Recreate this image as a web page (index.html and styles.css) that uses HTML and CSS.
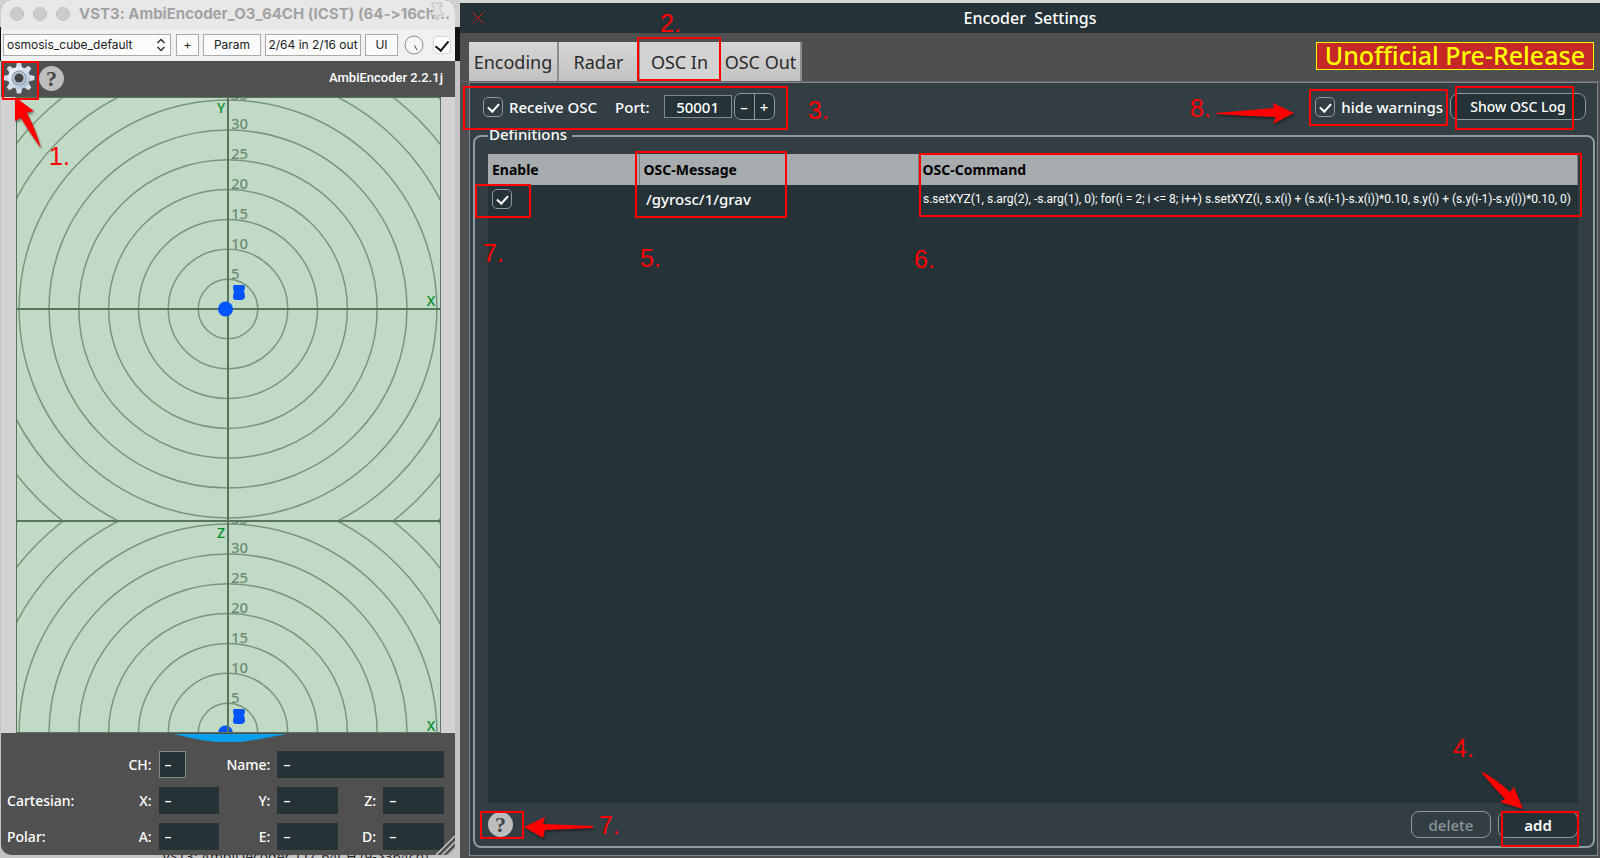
FILE: index.html
```html
<!DOCTYPE html>
<html lang="en">
<head>
<meta charset="utf-8">
<title>Encoder Settings</title>
<link rel="stylesheet" href="styles.css">
</head>
<body>
<main class="desktop">
  <div class="plugin-column">
    <section class="plugin-window" aria-label="AmbiEncoder">
      <header class="titlebar">
        <span class="light"></span><span class="light"></span><span class="light"></span>
        <h1 class="titlebar-text">VST3: AmbiEncoder_O3_64CH (ICST) (64-&gt;16ch...</h1>
        <svg class="pin" viewBox="0 0 16 18" aria-hidden="true"><path d="M3 1h10v3h-2v5l3 2v2H9v5H7v-5H2v-2l3-2V4H3z" fill="#e4e4e4" stroke="#bdbdbd"/></svg>
      </header>
      <div class="host-bar">
        <select class="host-select" aria-label="Preset"><option>osmosis_cube_default</option></select>
        <svg class="chevrons" viewBox="0 0 10 14" aria-hidden="true"><path d="M1.500 5 5 1.500 8.500 5M1.500 9 5 12.500 8.500 9" fill="none" stroke="#333" stroke-width="1.500"/></svg>
        <button class="host-button plus">+</button>
        <button class="host-button param">Param</button>
        <button class="host-button io">2/64 in 2/16 out</button>
        <button class="host-button ui">UI</button>
        <svg class="knob" viewBox="0 0 20 20" aria-hidden="true"><circle cx="10" cy="10" r="9" fill="#f6f6f6" stroke="#8a8a8a"/><path d="M10.500 10.500 13 15" stroke="#444"/></svg>
        <input class="host-check" type="checkbox" checked aria-label="Enable plugin">
      </div>
      <div class="plugin-head">
        <button class="icon-button" aria-label="Settings">
          <svg class="gear" viewBox="-16 -16 32 32">
            <defs>
              <linearGradient id="metal" x1="0" y1="0" x2="1" y2="1"><stop offset="0" stop-color="#fff"/><stop offset=".5" stop-color="#cfdcea"/><stop offset="1" stop-color="#9fb2c8"/></linearGradient>
              <path id="tooth" d="M-3.500-9-2-15.500H2L3.500-9z"/>
            </defs>
            <g fill="#d3deea"><use href="#tooth"/><use href="#tooth" transform="rotate(45)"/><use href="#tooth" transform="rotate(90)"/><use href="#tooth" transform="rotate(135)"/><use href="#tooth" transform="rotate(180)"/><use href="#tooth" transform="rotate(225)"/><use href="#tooth" transform="rotate(270)"/><use href="#tooth" transform="rotate(315)"/></g>
            <circle r="11" fill="url(#metal)"/><circle r="7.500" fill="#8d9cae"/><circle r="6.500" fill="#b9c7d6"/><circle r="4.500" fill="#444"/>
          </svg>
        </button>
        <button class="help">?</button>
        <span class="version">AmbiEncoder 2.2.1j</span>
      </div>
      <div class="radar-area">
        <svg class="radar" viewBox="0 0 425 636" role="img" aria-label="Source position radar">
          <defs>
            <clipPath id="top-half"><rect width="425" height="424"/></clipPath>
            <clipPath id="bottom-half"><rect y="424" width="425" height="212"/></clipPath>
            <g id="rings" fill="none" stroke="#7a957f" stroke-width="1.500">
              <circle r="29.800"/><circle r="59.700"/><circle r="89.500"/><circle r="119.400"/><circle r="149.200"/><circle r="179"/><circle r="208.900"/><circle r="238.700"/><circle r="268.600"/><circle r="298.400"/>
            </g>
            <g id="marks" class="mark">
              <text x="3" y="-30">5</text><text x="3" y="-60">10</text><text x="3" y="-90">15</text><text x="3" y="-120">20</text><text x="3" y="-150">25</text><text x="3" y="-180">30</text><text x="3" y="-209">35</text>
            </g>
            <path id="source" d="M5-23q0-1 2-1h8q2 0 2 2 0 2-1 4 1 3 1 6-1 3-3 3H8q-3 0-3-3 0-3 1-5-1-3-1-6z"/>
          </defs>
          <rect width="425" height="636" fill="#c1dac5"/>
          <g clip-path="url(#top-half)">
            <g transform="translate(212 212)"><use href="#rings"/><use href="#marks"/></g>
            <path d="M0 212H425" stroke="#57745d" stroke-width="2"/>
          </g>
          <g clip-path="url(#bottom-half)">
            <g transform="translate(212 636)"><use href="#rings"/><use href="#marks"/></g>
            <circle cx="209.500" cy="636" r="7.500" fill="#0055ff"/>
          </g>
          <path d="M212 0V636M0 424H425" stroke="#57745d" stroke-width="2"/>
          <rect x=".5" y=".5" width="424" height="635" fill="none" stroke="#57745d"/>
          <circle cx="209.500" cy="212" r="7.500" fill="#0055ff"/>
          <use href="#source" x="212" y="212" fill="#0055ff"/><use href="#source" x="212" y="636" fill="#0055ff"/>
          <path d="M158 637H271Q250 641 226 645H200Q176 642 158 637z" fill="#0a9fea"/>
          <g class="axis"><text x="205" y="16">Y</text><text x="415" y="209">X</text><text x="205" y="441">Z</text><text x="415" y="634">X</text></g>
        </svg>
      </div>
      <form class="coords">
        <label class="c-label wide" for="ch">CH:</label><input class="field ch" id="ch" value="–">
        <label class="c-label" for="name">Name:</label><input class="field name" id="name" value="–">
        <span class="c-group">Cartesian:</span>
        <label class="c-label" for="x">X:</label><input class="field" id="x" value="–">
        <label class="c-label" for="y">Y:</label><input class="field" id="y" value="–">
        <label class="c-label" for="z">Z:</label><input class="field" id="z" value="–">
        <span class="c-group">Polar:</span>
        <label class="c-label" for="a">A:</label><input class="field" id="a" value="–">
        <label class="c-label" for="e">E:</label><input class="field" id="e" value="–">
        <label class="c-label" for="d">D:</label><input class="field" id="d" value="–">
      </form>
      <svg class="grip" viewBox="0 0 20 20" aria-hidden="true"><path d="M1 20 20 1M7 20 20 7M13 20 20 13" stroke="#c9c9c9" stroke-width="1.500"/></svg>
    </section>
    <div class="behind">VST3: AmbiDecoder_O2_64CH (9-&gt;364ch)</div>
  </div>

  <section class="settings" aria-label="Encoder Settings">
    <header class="settings-title">
      <button class="close" aria-label="Close"><svg viewBox="0 0 12 12"><path d="M.5.500l11 11M11.500.500l-11 11" stroke="#c4121b" fill="none"/></svg></button>
      <h2 class="settings-heading">Encoder&nbsp; Settings</h2>
    </header>
    <div class="tab-row">
      <nav class="tabs" role="tablist">
        <button class="tab first" role="tab">Encoding</button>
        <button class="tab" role="tab">Radar</button>
        <button class="tab active" role="tab" aria-selected="true">OSC In</button>
        <button class="tab" role="tab">OSC Out</button>
      </nav>
      <strong class="release">Unofficial Pre-Release</strong>
    </div>
    <div class="pane">
      <div class="options">
        <label class="check-label"><input class="check" type="checkbox" checked>Receive OSC</label>
        <label class="port-label" for="port">Port:</label>
        <input class="port" id="port" value="50001">
        <div class="stepper"><button>–</button><button>+</button></div>
        <label class="check-label push"><input class="check" type="checkbox" checked>hide warnings</label>
        <button class="pill log">Show OSC Log</button>
      </div>
      <fieldset class="definitions">
        <legend>Definitions</legend>
        <div class="list">
          <table class="osc-table">
            <colgroup><col class="col-enable"><col class="col-message"><col></colgroup>
            <thead><tr><th>Enable</th><th>OSC-Message</th><th>OSC-Command</th></tr></thead>
            <tbody><tr>
              <td><input class="check" type="checkbox" checked aria-label="Enable /gyrosc/1/grav"></td>
              <td class="message">/gyrosc/1/grav</td>
              <td class="command">s.setXYZ(1, s.arg(2), -s.arg(1), 0); for(i = 2; i &lt;= 8; i++) s.setXYZ(i, s.x(i) + (s.x(i-1)-s.x(i))*0.10, s.y(i) + (s.y(i-1)-s.y(i))*0.10, 0)</td>
            </tr></tbody>
          </table>
        </div>
        <div class="list-actions">
          <button class="help">?</button>
          <button class="pill push" disabled>delete</button>
          <button class="pill add">add</button>
        </div>
      </fieldset>
    </div>
  </section>

  <svg class="notes" viewBox="0 0 1600 858" preserveAspectRatio="none">
    <g fill="none" stroke="#f00" stroke-width="2">
      <rect x="3" y="62" width="35" height="37"/>
      <rect x="638" y="38" width="82" height="42"/>
      <rect x="464" y="87" width="323" height="42"/>
      <rect x="1310" y="90" width="137" height="35"/>
      <rect x="1456" y="87" width="117" height="42"/>
      <rect x="636" y="152" width="150" height="65"/>
      <rect x="920" y="154" width="661" height="62"/>
      <rect x="476" y="185" width="54" height="32"/>
      <rect x="481" y="812" width="42" height="26"/>
      <rect x="1502" y="812" width="76" height="34"/>
    </g>
    <g class="arrows">
      <path d="M15 97 34 111 27 113Q36 130 41 148 31 135 21 118L15 121z"/>
      <path d="M1216 113 1274 108 1273 103 1294 113 1273 124 1276 117Q1246 116 1216 114z"/>
      <path d="M524 827 545 817 543 824 593 826V828L545 830 543 838z"/>
      <path d="M1483 772Q1497 780 1510 792L1514 787 1523 809 1500 802 1505 799Q1492 786 1482 773z"/>
    </g>
    <g class="numbers">
      <text x="49" y="165">1.</text><text x="660" y="32">2.</text><text x="808" y="119">3.</text><text x="1453" y="757">4.</text><text x="640" y="267">5.</text><text x="914" y="268">6.</text><text x="483" y="262">7.</text><text x="599" y="834">7.</text><text x="1190" y="117">8.</text>
    </g>
  </svg>
</main>
</body>
</html>
```

FILE: styles.css
```css
* { box-sizing: border-box; }

body {
  margin: 0;
  font: 500 14px/20px "Noto Sans", "Open Sans", sans-serif;
  color: #fff;
}

button, input, select { font: inherit; color: inherit; margin: 0; padding: 0; }
h1, h2 { margin: 0; }

.desktop {
  position: relative;
  display: grid;
  grid-template-columns: minmax(0, 460fr) minmax(0, 1140fr);
  min-height: 100vh;
  overflow: hidden;
  background: linear-gradient(#d0d0d0 27px, #141414 27px, #141414 61px, #c4c4c4 61px);
}

/* plug-in window */
.plugin-column { display: flex; flex-direction: column; padding: 0 5px 0 1px; }

.plugin-window {
  position: relative;
  flex: 1;
  display: flex;
  flex-direction: column;
  border-radius: 10px;
  overflow: hidden;
  background: #505050;
}

.titlebar {
  display: flex;
  align-items: center;
  gap: 9px;
  height: 30px;
  padding: 0 8px 2px 9px;
  background: #e9e8e8;
}
.light { flex: none; width: 14px; height: 14px; border: 1px solid #bfbfbf; border-radius: 50%; background: #cdcccc; }
.titlebar-text {
  flex: 1;
  min-width: 0;
  font: 700 15px/20px Inter, sans-serif;
  font-variant-ligatures: none;
  color: #a3a2a2;
  white-space: nowrap;
}
.pin { position: absolute; top: 2px; right: 10px; width: 16px; height: 18px; }

.host-bar {
  display: flex;
  align-items: center;
  height: 31px;
  padding: 0 5px 2px 2px;
  background: #f1f1f1;
  color: #222;
  font: 12px/16px Inter, sans-serif;
}
.host-select, .host-button { height: 22px; border: 1px solid #aaa; border-radius: 0; background: #fbfbfb; }
.host-select { flex: 1; min-width: 0; padding-left: 3px; appearance: none; }
.chevrons { width: 10px; height: 14px; margin: 0 10px 0 -15px; }
.host-button { margin-right: 4px; white-space: nowrap; }
.plus { width: 23px; }
.param { width: 58px; }
.io { width: 96px; }
.ui { width: 33px; }
.knob { width: 20px; height: 20px; margin: 0 10px 0 2px; }
.host-check {
  appearance: none;
  display: grid;
  place-items: center;
  width: 16px;
  height: 16px;
  border-radius: 4px;
  background: #fff;
  box-shadow: 0 0 2px #999;
}
.host-check::before {
  content: "";
  width: 6px;
  height: 11px;
  border: solid #111;
  border-width: 0 2px 2px 0;
  transform: rotate(40deg);
}

.plugin-head { display: flex; align-items: center; height: 36px; padding: 0 12px 2px 2px; }
.icon-button { width: 32px; height: 32px; border: 0; background: none; }
.gear { display: block; width: 32px; height: 32px; }
.help {
  width: 25px;
  height: 25px;
  border: 0;
  border-radius: 50%;
  background: #bdbdbd;
  color: #444;
  font: 700 22px/25px "Liberation Serif", serif;
}
.plugin-head .help { margin-left: 4px; }
.version { margin-left: auto; font: 500 13px/20px Roboto, sans-serif; }

.radar-area {
  padding: 0 14px 0 15px;
  background: #d3d2d3;
}
.radar { display: block; position: relative; width: 100%; overflow: visible; }
.mark { font-size: 15px; fill: #6f8a74; }
.axis { font-size: 14px; fill: #00902b; text-anchor: middle; }

.coords {
  display: grid;
  grid-template-columns: 83fr 55fr 61fr 42fr 61fr 31fr 61fr;
  gap: 9px 7px;
  align-items: center;
  padding: 18px 11px 4px 6px;
}
.c-label { text-align: right; }
.wide { grid-column: 1 / 3; }
.field {
  width: 100%;
  min-width: 0;
  height: 27px;
  padding-left: 6px;
  border: 0;
  background: #253238;
}
.ch { width: 27px; border: 1px solid #7f8b90; padding-left: 5px; }
.name { grid-column: 5 / 8; }
.grip { position: absolute; right: 0; bottom: 0; width: 20px; height: 20px; }

.behind {
  height: 3px;
  margin-left: 148px;
  padding-left: 13px;
  overflow: hidden;
  color: #222;
  font: 14px/4px "Open Sans", sans-serif;
  white-space: nowrap;
}

/* settings window */
.settings {
  display: flex;
  flex-direction: column;
  border-top: 3px solid #d8d8d8;
  background: #4f4f4f;
}
.settings-title {
  display: grid;
  grid-template-columns: 12px 1fr 12px;
  align-items: center;
  height: 30px;
  padding: 0 12px;
  background: #253238;
}
.close { width: 12px; height: 12px; border: 0; background: none; }
.close svg { display: block; }
.settings-heading { font-size: 16px; font-weight: 500; text-align: center; }

.tab-row {
  display: flex;
  justify-content: space-between;
  height: 49px;
  padding: 9px 6px 0 9px;
  border-bottom: 1px solid #666;
}
.tabs { display: flex; }
.tab {
  width: 81px;
  border: 0;
  border-right: 2px solid #8c8c8c;
  background: linear-gradient(#d6d6d6, #c2c2c2);
  color: #2b2b2b;
  font-size: 18px;
  font-weight: 400;
  white-space: nowrap;
}
.first { width: 90px; }
.active { background: #d3d3d3; }
.release {
  height: 28px;
  padding: 0 8px;
  border: 1px solid #ff0;
  background: #c62828;
  color: #ff0;
  font: 500 25px/25px "Noto Sans", sans-serif;
}

.pane {
  flex: 1;
  display: flex;
  flex-direction: column;
  margin: 0 2px 2px 9px;
  padding: 10px 2px 7px 3px;
  border: 1px solid #7d898e;
  background: #323e44;
}
.options { display: flex; align-items: center; height: 27px; padding: 0 9px 0 10px; font-size: 15px; line-height: 18px; }
.check-label { display: flex; align-items: center; gap: 6px; }
.check {
  appearance: none;
  display: inline-grid;
  place-items: center;
  width: 20px;
  height: 20px;
  border: 1px solid #8e999e;
  border-radius: 5px;
}
.check::before {
  content: "";
  width: 5px;
  height: 9px;
  border: solid #fff;
  border-width: 0 2px 2px 0;
  transform: rotate(42deg);
}
.port-label { margin-left: 18px; }
.port { width: 68px; height: 23px; margin: 0 2px 0 14px; border: 1px solid #7d898e; background: #253238; text-align: center; }
.stepper { display: flex; width: 41px; height: 27px; border: 1px solid #8e999e; border-radius: 7px; background: #253238; }
.stepper button { flex: 1; border: 0; background: none; }
.stepper button + button { border-left: 1px solid #8e999e; }
.push { margin-left: auto; }
.pill { width: 80px; height: 27px; border: 1px solid #8e999e; border-radius: 8px; background: #253238; }
.pill:disabled { color: #8b9498; background: none; }
.log { width: 136px; margin-left: 7px; font-size: 14px; }

.definitions {
  flex: 1;
  display: flex;
  flex-direction: column;
  min-width: 0;
  margin: 6px 0 0;
  padding: 8px 15px 8px 13px;
  border: 2px solid #8f9a9e;
  border-radius: 8px;
}
.definitions legend { height: 20px; padding: 0 5px 0 1px; font-size: 15px; line-height: 16px; }
.list { flex: 1; background: #253238; }
.osc-table { width: 100%; table-layout: fixed; border-collapse: collapse; }
.col-enable { width: 151px; }
.col-message { width: 279px; }
.osc-table th {
  height: 31px;
  padding: 0 4px;
  border-right: 1px solid #7a8184;
  background: #a6abad;
  color: #000;
  text-align: left;
}
.osc-table td { height: 27px; padding: 0 4px; white-space: nowrap; }
.osc-table .check { display: grid; }
.osc-table .message { padding-left: 7px; font-size: 15px; }
.osc-table .command { padding-left: 5px; font: 12px/20px Roboto, sans-serif; }
.list-actions { display: flex; align-items: center; gap: 7px; padding-top: 8px; font-size: 15px; line-height: 18px; }
.add { font-weight: 600; }

/* numbered call-outs over both windows */
.notes { position: absolute; inset: 0; width: 100%; height: 100%; pointer-events: none; }
.arrows { fill: #f00; filter: drop-shadow(1px 2px 1px rgba(0, 0, 0, .4)); }
.numbers { fill: #f00; font: 25px "Liberation Sans", sans-serif; }
```
